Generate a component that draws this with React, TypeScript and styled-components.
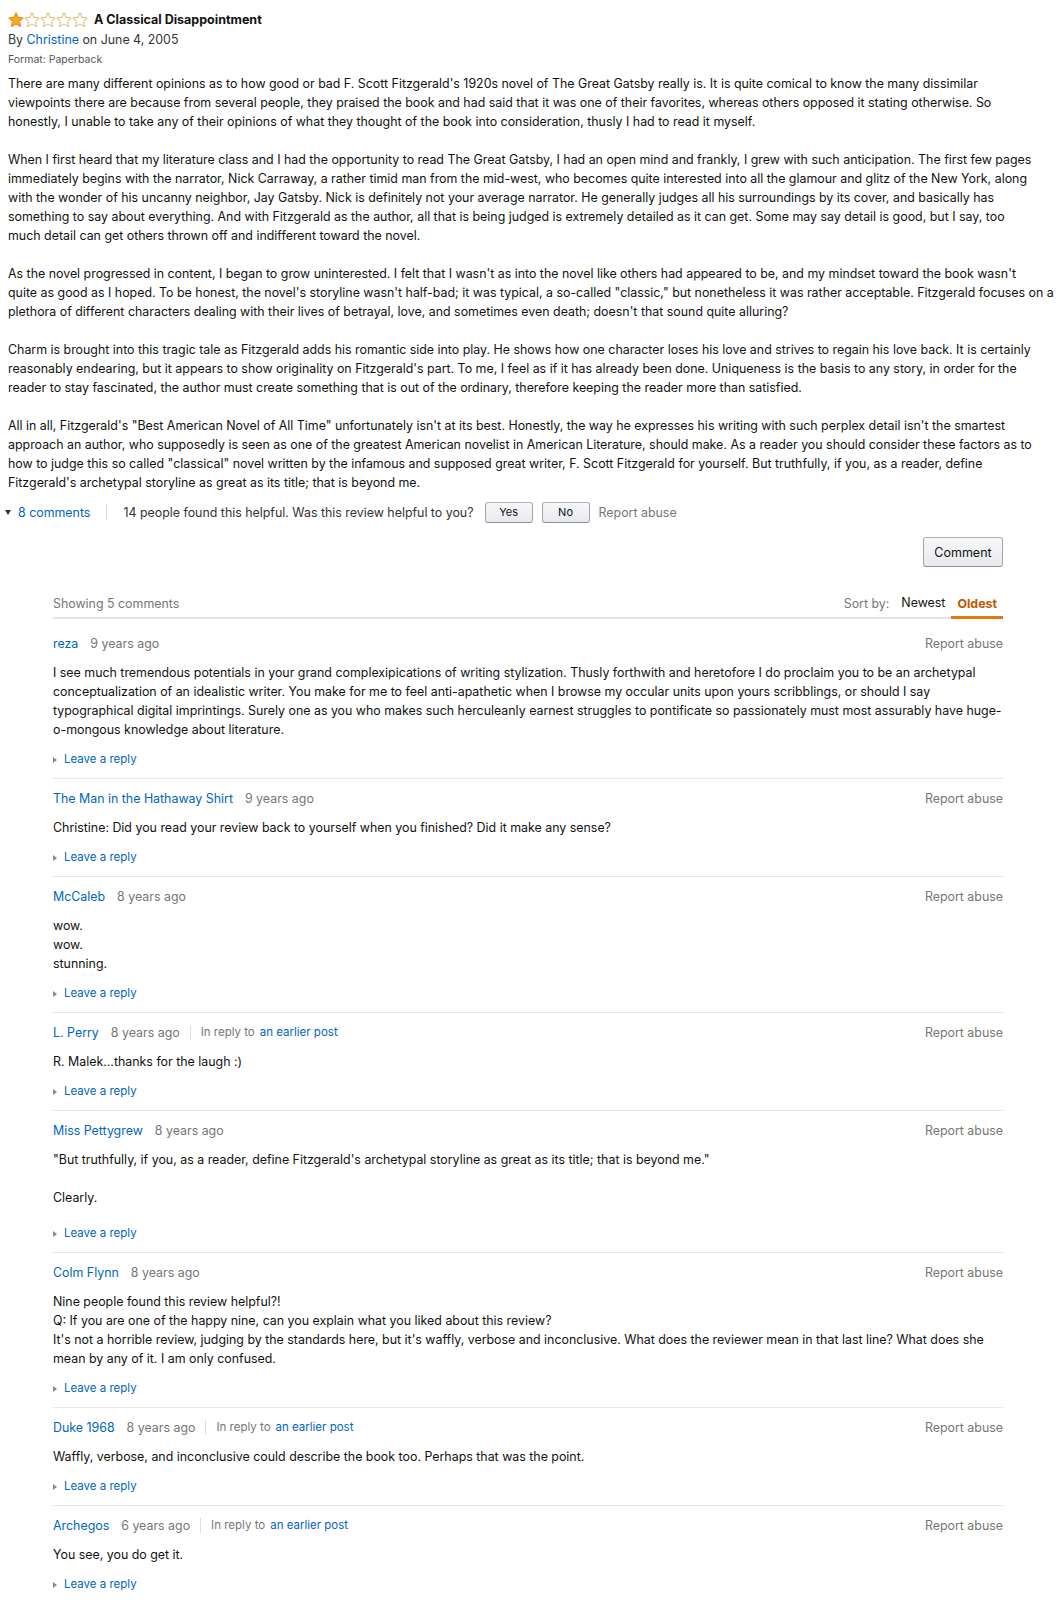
import React from "react";
import styled, { createGlobalStyle } from "styled-components";

const GlobalStyle = createGlobalStyle`
  html, body { margin: 0; padding: 0; background: #fff; }
  body {
    font-family: Inter, "Liberation Sans", Arial, sans-serif;
    font-size: 12.4px;
    line-height: 19px;
    color: #111;
  }
  * { box-sizing: border-box; }
`;

const Page = styled.div`
  padding: 10px 8px 12px 8px;
  width: 1059px;
`;

const TitleRow = styled.div`
  display: flex;
  align-items: center;
  gap: 6px;
  height: 19px;
`;

const Stars = styled.div`
  display: flex;
`;

const Title = styled.span`
  font-weight: 700;
  font-size: 12.5px;
  color: #111;
`;

const Byline = styled.div`
  color: #333;
  line-height: 19px;
  margin-top: 1px;
`;

const Link = styled.a`
  color: #0066c0;
  text-decoration: none;
  cursor: pointer;
`;

const Format = styled.div`
  font-size: 10.5px;
  line-height: 19px;
  color: #555;
  margin: 1px 0 5px 0;
`;

const Paragraph = styled.p`
  margin: 0 0 19px 0;
  &:last-child { margin-bottom: 0; }
`;

const Line = styled.span`
  display: block;
  white-space: nowrap;
`;

const ActionRow = styled.div`
  display: flex;
  align-items: center;
  margin-top: 8px;
  height: 24px;
`;

const Caret = styled.span<{ $dir: "down" | "right"; $color?: string }>`
  display: inline-block;
  width: 0;
  height: 0;
  ${(p) =>
    p.$dir === "down"
      ? `border-left: 3.5px solid transparent; border-right: 3.5px solid transparent; border-top: 5px solid ${p.$color || "#333"};`
      : `border-top: 3px solid transparent; border-bottom: 3px solid transparent; border-left: 4px solid ${p.$color || "#888"};`}
`;

const CommentsToggle = styled.span`
  display: inline-flex;
  align-items: center;
  gap: 7px;
  margin-left: -3px;
`;

const VDivider = styled.span<{ $h?: number; $gap?: number }>`
  display: inline-block;
  width: 1px;
  height: ${(p) => p.$h ?? 16}px;
  background: #ddd;
  margin: 0 ${(p) => p.$gap ?? 16}px;
`;

const HelpText = styled.span`
  color: #333;
  margin-right: 11px;
`;

const SmallButton = styled.button`
  font-family: inherit;
  font-size: 11px;
  color: #111;
  width: 48px;
  height: 21px;
  padding: 0;
  margin-right: 9px;
  border: 1px solid #adb1b8;
  border-color: #adb1b8 #a2a6ac #8d9096;
  border-radius: 3px;
  background: linear-gradient(to bottom, #f7f8fa, #e7e9ec);
`;

const GrayText = styled.span`
  color: #767676;
`;

const CommentsSection = styled.div`
  margin: 13px 48px 0 45px;
`;

const ButtonRow = styled.div`
  display: flex;
  justify-content: flex-end;
`;

const CommentButton = styled.button`
  font-family: inherit;
  font-size: 12.5px;
  color: #111;
  width: 80px;
  height: 30px;
  padding: 0;
  border: 1px solid #adb1b8;
  border-color: #adb1b8 #a2a6ac #8d9096;
  border-radius: 3px;
  background: linear-gradient(to bottom, #f7f8fa, #e7e9ec);
`;

const SortHeader = styled.div`
  margin-top: 26px;
  display: flex;
  justify-content: space-between;
  align-items: flex-end;
  border-bottom: 2px solid #e3e3e3;
`;

const ShowingText = styled.span`
  color: #767676;
  padding-bottom: 4px;
`;

const SortGroup = styled.div`
  display: flex;
  align-items: flex-end;
`;

const SortLabel = styled.span`
  color: #767676;
  padding: 0 6px 4px 0;
`;

const SortTab = styled.span<{ $active?: boolean }>`
  padding: 0 6px 4px 6px;
  margin-bottom: -2px;
  border-bottom: 3px solid ${(p) => (p.$active ? "#e47911" : "transparent")};
  color: ${(p) => (p.$active ? "#c45500" : "#111")};
  font-weight: ${(p) => (p.$active ? 700 : 400)};
  padding-bottom: ${(p) => (p.$active ? "3px" : "4px")};
`;

const CommentList = styled.div`
  padding-top: 5px;
`;

const CommentItem = styled.div`
  padding: 10px 0 9px 0;
  border-bottom: 1px solid #e7e7e7;
  &:last-child { border-bottom: none; }
`;

const CommentHeader = styled.div`
  display: flex;
  align-items: center;
  height: 19px;
`;

const Author = styled(Link)`
  margin-right: 12px;
`;

const Ago = styled.span`
  color: #767676;
`;

const ReplyTo = styled.span`
  font-size: 11.5px;
  color: #767676;
  display: inline-flex;
  align-items: center;
  gap: 5px;
`;

const Spacer = styled.div`
  flex: 1;
`;

const CommentBody = styled.div<{ $tail?: boolean }>`
  margin-top: 10px;
  padding-bottom: ${(p) => (p.$tail ? 6 : 0)}px;
`;

const LeaveReply = styled.div`
  margin-top: 11px;
  display: flex;
  align-items: center;
  gap: 7px;
  font-size: 11.5px;
`;

const Star: React.FC<{ filled: boolean }> = ({ filled }) => (
  <svg width="16" height="16" viewBox="0 0 16 16">
    <polygon
      points="8,0.8 10.2,5.5 15.3,6 11.5,9.4 12.6,14.6 8,12 3.4,14.6 4.5,9.4 0.7,6 5.8,5.5"
      fill={filled ? "#ffa41c" : "#fff"}
      stroke={filled ? "#d68a1a" : "#dfb46a"}
      strokeWidth="1"
      strokeLinejoin="round"
    />
  </svg>
);

type CommentData = {
  author: string;
  ago: string;
  reply?: boolean;
  tail?: boolean;
  lines: string[];
};

const comments: CommentData[] = [
  {
    author: "reza",
    ago: "9 years ago",
    lines: [
      "I see much tremendous potentials in your grand complexipications of writing stylization. Thusly forthwith and heretofore I do proclaim you to be an archetypal",
      "conceptualization of an idealistic writer. You make for me to feel anti-apathetic when I browse my occular units upon yours scribblings, or should I say",
      "typographical digital imprintings. Surely one as you who makes such herculeanly earnest struggles to pontificate so passionately must most assurably have huge-",
      "o-mongous knowledge about literature.",
    ],
  },
  {
    author: "The Man in the Hathaway Shirt",
    ago: "9 years ago",
    lines: ["Christine: Did you read your review back to yourself when you finished? Did it make any sense?"],
  },
  {
    author: "McCaleb",
    ago: "8 years ago",
    lines: ["wow.", "wow.", "stunning."],
  },
  {
    author: "L. Perry",
    ago: "8 years ago",
    reply: true,
    lines: ["R. Malek...thanks for the laugh :)"],
  },
  {
    author: "Miss Pettygrew",
    ago: "8 years ago",
    tail: true,
    lines: [
      "\"But truthfully, if you, as a reader, define Fitzgerald's archetypal storyline as great as its title; that is beyond me.\"",
      "",
      "Clearly.",
    ],
  },
  {
    author: "Colm Flynn",
    ago: "8 years ago",
    lines: [
      "Nine people found this review helpful?!",
      "Q: If you are one of the happy nine, can you explain what you liked about this review?",
      "It's not a horrible review, judging by the standards here, but it's waffly, verbose and inconclusive. What does the reviewer mean in that last line? What does she",
      "mean by any of it. I am only confused.",
    ],
  },
  {
    author: "Duke 1968",
    ago: "8 years ago",
    reply: true,
    lines: ["Waffly, verbose, and inconclusive could describe the book too. Perhaps that was the point."],
  },
  {
    author: "Archegos",
    ago: "6 years ago",
    reply: true,
    lines: ["You see, you do get it."],
  },
];

const paragraphs: string[][] = [
  [
    "There are many different opinions as to how good or bad F. Scott Fitzgerald's 1920s novel of The Great Gatsby really is. It is quite comical to know the many dissimilar",
    "viewpoints there are because from several people, they praised the book and had said that it was one of their favorites, whereas others opposed it stating otherwise. So",
    "honestly, I unable to take any of their opinions of what they thought of the book into consideration, thusly I had to read it myself.",
  ],
  [
    "When I first heard that my literature class and I had the opportunity to read The Great Gatsby, I had an open mind and frankly, I grew with such anticipation. The first few pages",
    "immediately begins with the narrator, Nick Carraway, a rather timid man from the mid-west, who becomes quite interested into all the glamour and glitz of the New York, along",
    "with the wonder of his uncanny neighbor, Jay Gatsby. Nick is definitely not your average narrator. He generally judges all his surroundings by its cover, and basically has",
    "something to say about everything. And with Fitzgerald as the author, all that is being judged is extremely detailed as it can get. Some may say detail is good, but I say, too",
    "much detail can get others thrown off and indifferent toward the novel.",
  ],
  [
    "As the novel progressed in content, I began to grow uninterested. I felt that I wasn't as into the novel like others had appeared to be, and my mindset toward the book wasn't",
    "quite as good as I hoped. To be honest, the novel's storyline wasn't half-bad; it was typical, a so-called \"classic,\" but nonetheless it was rather acceptable. Fitzgerald focuses on a",
    "plethora of different characters dealing with their lives of betrayal, love, and sometimes even death; doesn't that sound quite alluring?",
  ],
  [
    "Charm is brought into this tragic tale as Fitzgerald adds his romantic side into play. He shows how one character loses his love and strives to regain his love back. It is certainly",
    "reasonably endearing, but it appears to show originality on Fitzgerald's part. To me, I feel as if it has already been done. Uniqueness is the basis to any story, in order for the",
    "reader to stay fascinated, the author must create something that is out of the ordinary, therefore keeping the reader more than satisfied.",
  ],
  [
    "All in all, Fitzgerald's \"Best American Novel of All Time\" unfortunately isn't at its best. Honestly, the way he expresses his writing with such perplex detail isn't the smartest",
    "approach an author, who supposedly is seen as one of the greatest American novelist in American Literature, should make. As a reader you should consider these factors as to",
    "how to judge this so called \"classical\" novel written by the infamous and supposed great writer, F. Scott Fitzgerald for yourself. But truthfully, if you, as a reader, define",
    "Fitzgerald's archetypal storyline as great as its title; that is beyond me.",
  ],
];

export default function App() {
  return (
    <>
      <GlobalStyle />
      <Page>
        <TitleRow>
          <Stars>
            {[0, 1, 2, 3, 4].map((i) => (
              <Star key={i} filled={i === 0} />
            ))}
          </Stars>
          <Title>A Classical Disappointment</Title>
        </TitleRow>
        <Byline>
          By <Link>Christine</Link> on June 4, 2005
        </Byline>
        <Format>Format: Paperback</Format>
        <div>
          {paragraphs.map((p, i) => (
            <Paragraph key={i}>
              {p.map((l, j) => (
                <Line key={j}>{l}</Line>
              ))}
            </Paragraph>
          ))}
        </div>
        <ActionRow>
          <CommentsToggle>
            <Caret $dir="down" />
            <Link>8 comments</Link>
          </CommentsToggle>
          <VDivider />
          <HelpText>14 people found this helpful. Was this review helpful to you?</HelpText>
          <SmallButton>Yes</SmallButton>
          <SmallButton>No</SmallButton>
          <GrayText>Report abuse</GrayText>
        </ActionRow>
        <CommentsSection>
          <ButtonRow>
            <CommentButton>Comment</CommentButton>
          </ButtonRow>
          <SortHeader>
            <ShowingText>Showing 5 comments</ShowingText>
            <SortGroup>
              <SortLabel>Sort by:</SortLabel>
              <SortTab>Newest</SortTab>
              <SortTab $active>Oldest</SortTab>
            </SortGroup>
          </SortHeader>
          <CommentList>
            {comments.map((c, i) => (
              <CommentItem key={i}>
                <CommentHeader>
                  <Author>{c.author}</Author>
                  <Ago>{c.ago}</Ago>
                  {c.reply && (
                    <>
                      <VDivider $h={15} $gap={10} />
                      <ReplyTo>
                        In reply to <Link>an earlier post</Link>
                      </ReplyTo>
                    </>
                  )}
                  <Spacer />
                  <GrayText>Report abuse</GrayText>
                </CommentHeader>
                <CommentBody $tail={c.tail}>
                  {c.lines.map((l, j) => (
                    <Line key={j}>{l || "\u00a0"}</Line>
                  ))}
                </CommentBody>
                <LeaveReply>
                  <Caret $dir="right" />
                  <Link>Leave a reply</Link>
                </LeaveReply>
              </CommentItem>
            ))}
          </CommentList>
        </CommentsSection>
      </Page>
    </>
  );
}
